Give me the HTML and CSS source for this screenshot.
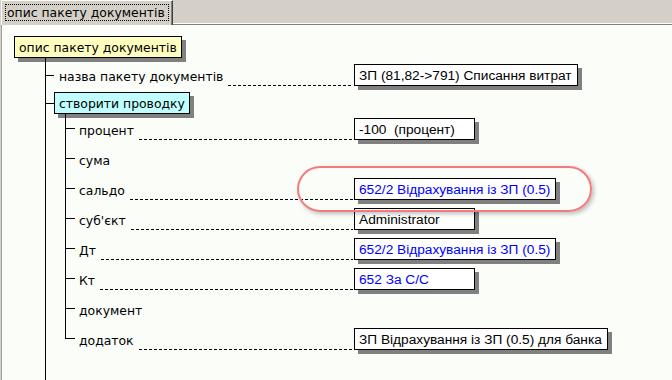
FILE: index.html
```html
<!DOCTYPE html>
<html lang="uk">
<head>
  <meta charset="UTF-8">
  <title>опис пакету документів</title>
  <link rel="stylesheet" href="styles.css">
</head>
<body>
  <div class="tabs">
    <div class="tab"><span class="tab-label">опис пакету документів</span></div>
    <div class="tab-rest"></div>
  </div>

  <div class="panel">
    <div class="node root">опис пакету документів</div>

    <div class="l1">
      <div class="row r1">
        <span class="conn"></span>
        <span class="label">назва пакету документів</span>
        <span class="dash"></span>
        <div class="val"><span class="box">ЗП (81,82-&gt;791) Списання витрат</span></div>
      </div>

      <div class="row r1 group">
        <span class="conn"></span>
        <div class="node sub">створити проводку</div>
      </div>

      <div class="l2">
        <div class="row r2">
          <span class="conn"></span>
          <span class="label">процент</span>
          <span class="dash"></span>
          <div class="val"><span class="box">-100  (процент)</span></div>
        </div>
        <div class="row r2">
          <span class="conn"></span>
          <span class="label">сума</span>
          <span class="fill"></span>
          <div class="val"></div>
        </div>
        <div class="row r2">
          <span class="conn"></span>
          <span class="label">сальдо</span>
          <span class="dash"></span>
          <div class="val"><span class="box link">652/2 Відрахування із ЗП (0.5)</span></div>
        </div>
        <div class="row r2">
          <span class="conn"></span>
          <span class="label">суб'єкт</span>
          <span class="dash"></span>
          <div class="val"><span class="box">Administrator</span></div>
        </div>
        <div class="row r2">
          <span class="conn"></span>
          <span class="label">Дт</span>
          <span class="dash"></span>
          <div class="val"><span class="box link">652/2 Відрахування із ЗП (0.5)</span></div>
        </div>
        <div class="row r2">
          <span class="conn"></span>
          <span class="label">Кт</span>
          <span class="dash"></span>
          <div class="val"><span class="box link">652 За С/С</span></div>
        </div>
        <div class="row r2">
          <span class="conn"></span>
          <span class="label">документ</span>
          <span class="fill"></span>
          <div class="val"></div>
        </div>
        <div class="row r2 last">
          <span class="conn"></span>
          <span class="label">додаток</span>
          <span class="dash"></span>
          <div class="val"><span class="box">ЗП Відрахування із ЗП (0.5) для банка</span></div>
        </div>
      </div>
    </div>
  </div>

  <!-- позначка поверх дерева -->
  <div class="mark"></div>
</body>
</html>
```

FILE: styles.css
```css
html, body {
  margin: 0;
  height: 380px;
  overflow: hidden;
}

body {
  position: relative;
  background-color: #d4d0c8;
  font-family: 'DejaVu Sans', sans-serif;
  font-size: 12.4px;
  color: #000;
}

/* вкладки */
.tabs {
  display: flex;
  height: 25px;
}

.tab {
  box-sizing: border-box;
  width: 172px;
  height: 25px;
  margin-left: 1px;
  padding: 3px 3px 3px 3px;
  border-top: 1px solid #fff;
  border-left: 1px solid #fff;
  border-right: 1px solid #404040;
  box-shadow: inset -1px 0 0 #808080;
}

.tab-label {
  display: block;
  height: 17px;
  line-height: 17px;
  padding-left: 2px;
  outline: 1px dotted #000;
  outline-offset: -1px;
  white-space: nowrap;
}

.tab-rest {
  flex: 1;
  box-sizing: border-box;
  height: 25px;
  border-bottom: 1px solid #808080;
  box-shadow: inset 0 -1px 0 #fff;
}

/* панель з деревом */
.panel {
  height: 355px;
  margin-left: 1px;
  border-left: 1px solid #a0a0a0;
  background-color: #fbfdf9;
  overflow: hidden;
}

.node {
  box-sizing: border-box;
  width: fit-content;
  height: 22px;
  line-height: 21px;
  padding: 0 4px 0 4px;
  border: 1px solid #000;
  box-shadow: 4px 4px 0 #808080;
  white-space: nowrap;
}

.root {
  margin: 11px 0 0 12px;
  background-color: #ffffc0;
}

.sub {
  background-color: #c0ffff;
}

.l1 {
  margin-left: 43px;
  padding-top: 3px;
  height: 400px;
  border-left: 1px solid #000;
}

.row {
  display: flex;
  align-items: center;
}

.r1 {
  height: 28px;
}

.r1.group {
  height: 22px;
  margin-top: 3px;
}

.conn {
  display: flex;
  flex-direction: column;
  align-self: stretch;
  flex-shrink: 0;
}

.conn::before,
.conn::after {
  content: '';
  flex: 1;
}

.conn::before {
  border-bottom: 1px solid #000;
}

.r1 .conn {
  width: 8px;
}

.r1 .conn::before {
  flex: none;
  height: 14px;
}

.r1.group .conn::before {
  height: 11px;
}

.l2 {
  margin-left: 19px;
}

.r2 {
  height: 30px;
}

.r2 .conn {
  width: 10px;
}

.r2 .conn::before {
  flex: none;
  height: 15px;
  box-sizing: border-box;
  border-left: 1px solid #000;
}

.r2 .conn::after {
  border-left: 1px solid #000;
}

.r2.last .conn::after {
  border-left: none;
}

.label {
  margin-left: 4px;
  padding-top: 2px;
  white-space: nowrap;
}

.r1 .label {
  margin-left: 5px;
}

.dash {
  flex: 1;
  height: 22px;
  margin: 0 1px 0 5px;
  background: repeating-linear-gradient(90deg, #000 0 3px, transparent 3px 5px) left bottom / 100% 1px no-repeat;
}

.fill {
  flex: 1;
}

.val {
  width: 318px;
  flex-shrink: 0;
  display: flex;
}

.box {
  box-sizing: border-box;
  min-width: 121px;
  height: 22px;
  line-height: 21px;
  padding: 0 5px 0 4px;
  border: 1px solid #000;
  background-color: #fff;
  box-shadow: 4px 4px 0 #808080;
  font-family: 'Liberation Sans', Arial, sans-serif;
  font-size: 13.7px;
  white-space: pre;
}

.box.link {
  color: #0000ff;
}

.mark {
  position: absolute;
  left: 297px;
  top: 166px;
  width: 295px;
  height: 46px;
  box-sizing: border-box;
  border: 2px solid #f27c7c;
  border-radius: 23px;
  box-shadow: 2px 2px 4px rgba(0, 0, 0, 0.25);
}
```
